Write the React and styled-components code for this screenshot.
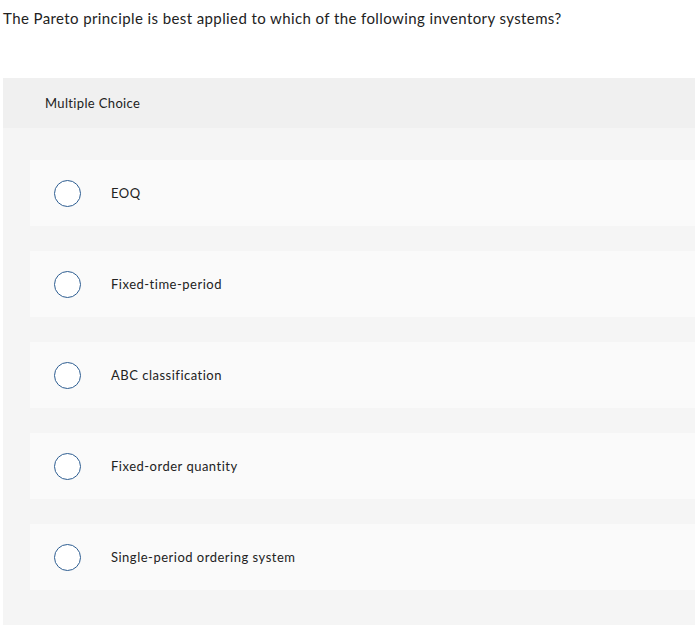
import React from "react";
import styled, { createGlobalStyle } from "styled-components";

const Global = createGlobalStyle`
  html, body { margin: 0; padding: 0; background: #fff; overflow: hidden; }
  body { font-family: "Lato", "Liberation Sans", Arial, sans-serif; color: #1f1f1f; }
`;

const Page = styled.div`
  width: 695px;
  height: 625px;
  overflow: hidden;
`;

const Question = styled.p`
  margin: 0;
  padding: 8px 0 0 3px;
  font-size: 15px;
  line-height: 20px;
  letter-spacing: 0.4px;
  color: #222;
`;

const Panel = styled.section`
  margin: 50px 0 0 3px;
  width: 720px;
  background: #f5f5f5;
  min-height: 560px;
`;

const Header = styled.div`
  height: 50px;
  background: #f0f0f0;
  display: flex;
  align-items: center;
  padding-left: 42px;
  font-size: 13px;
  letter-spacing: 0.35px;
  color: #222;
`;

const List = styled.div`
  display: flex;
  flex-direction: column;
  gap: 25px;
  padding: 32px 0 0 27px;
`;

const Option = styled.label`
  height: 66px;
  background: #fafafa;
  display: flex;
  align-items: center;
  padding-left: 24px;
  font-size: 13px;
  letter-spacing: 0.5px;
  color: #222;
  cursor: pointer;
`;

const Radio = styled.span`
  width: 25px;
  height: 25px;
  border: 1.5px solid #2d5d91;
  border-radius: 50%;
  background: #fff;
  flex: none;
  margin-right: 30px;
`;

const options = [
  "EOQ",
  "Fixed-time-period",
  "ABC classification",
  "Fixed-order quantity",
  "Single-period ordering system",
];

export default function App() {
  return (
    <Page>
      <Global />
      <Question>
        The Pareto principle is best applied to which of the following inventory systems?
      </Question>
      <Panel>
        <Header>Multiple Choice</Header>
        <List>
          {options.map((o) => (
            <Option key={o}>
              <Radio />
              {o}
            </Option>
          ))}
        </List>
      </Panel>
    </Page>
  );
}
